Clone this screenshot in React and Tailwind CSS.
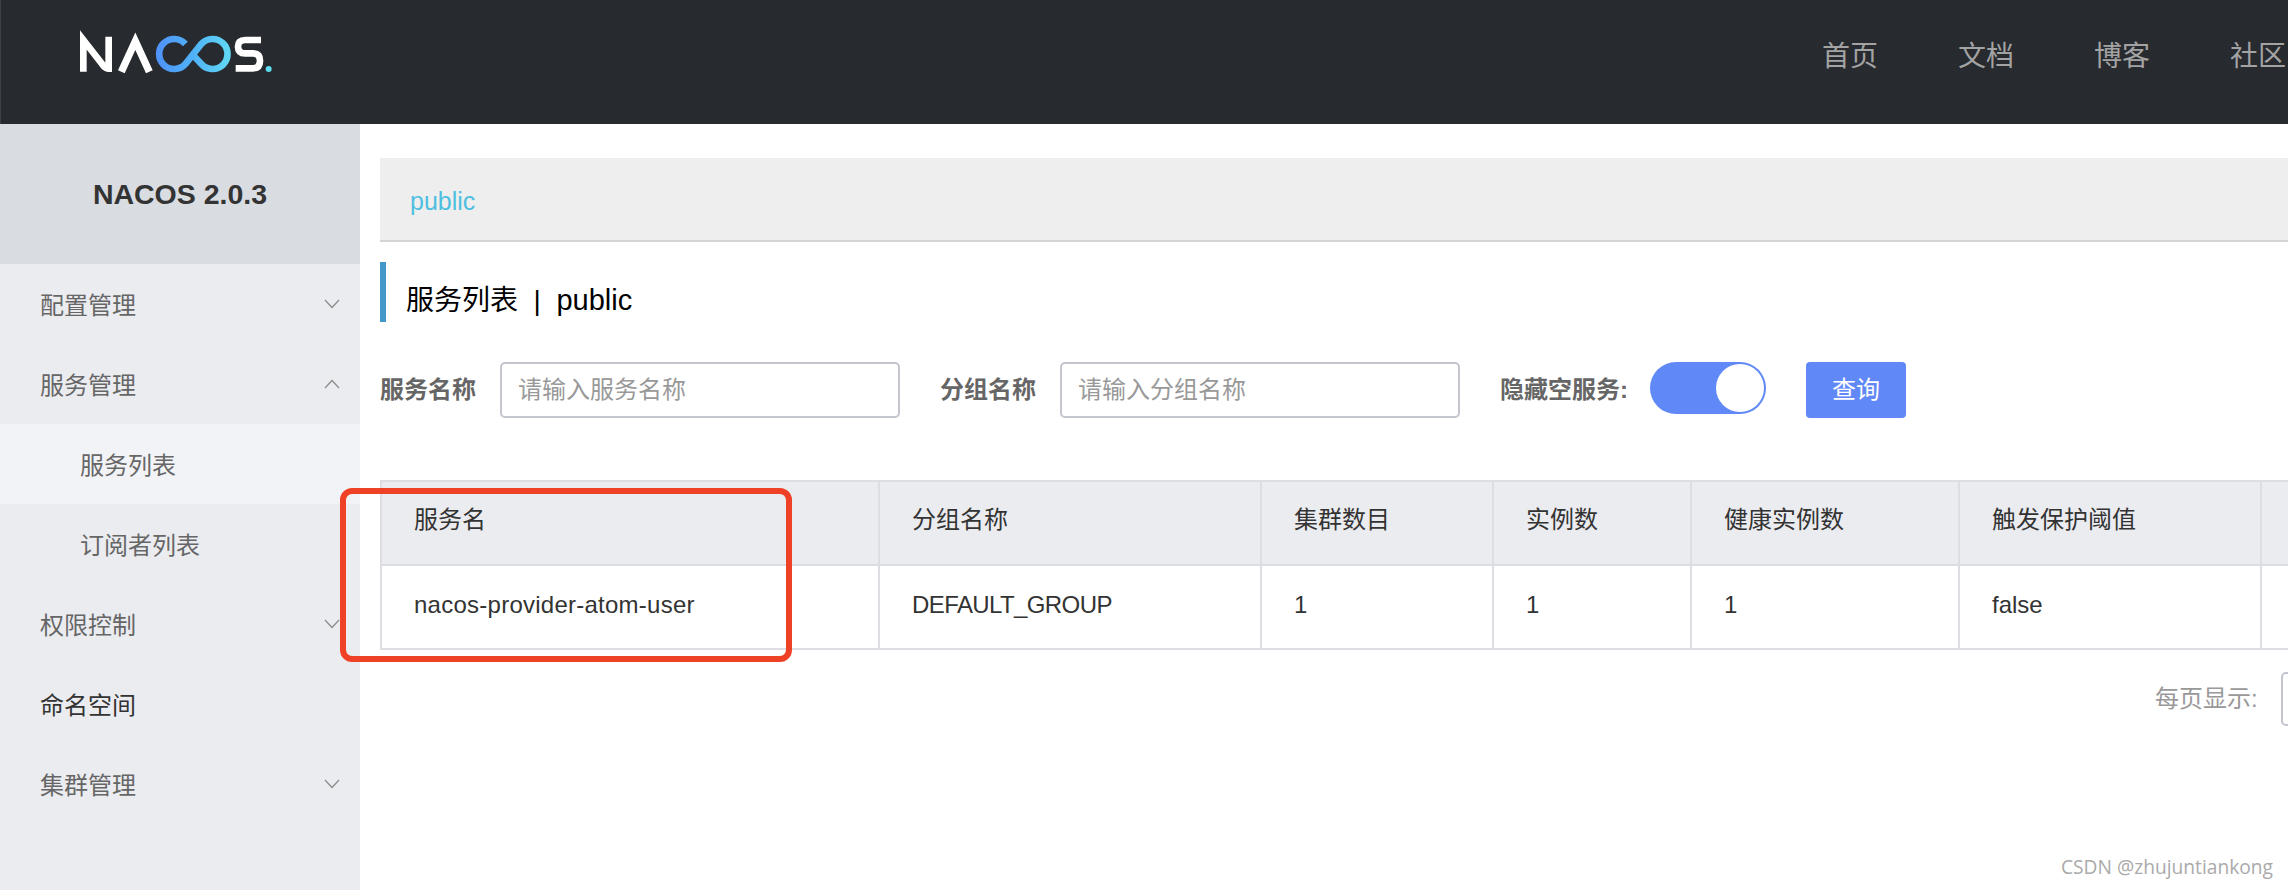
import React from 'react';

const font = { fontFamily: '"Liberation Sans", "Noto Sans CJK SC", sans-serif' };

const menus = [
  { name: '配置管理', arrow: 'down' },
  { name: '服务管理', arrow: 'up' },
  { name: '服务列表', sub: true, active: true },
  { name: '订阅者列表', sub: true },
  { name: '权限控制', arrow: 'down' },
  { name: '命名空间', dark: true },
  { name: '集群管理', arrow: 'down' },
];

const columns = [
  { title: '服务名', value: 'nacos-provider-atom-user', width: 'w-[498px]', valueClass: 'tracking-[0.25px]' },
  { title: '分组名称', value: 'DEFAULT_GROUP', width: 'w-[382px]', valueClass: 'tracking-[-0.6px]' },
  { title: '集群数目', value: '1', width: 'w-[232px]' },
  { title: '实例数', value: '1', width: 'w-[198px]' },
  { title: '健康实例数', value: '1', width: 'w-[268px]' },
  { title: '触发保护阈值', value: 'false', width: 'w-[302px]' },
  { title: '', value: '', width: 'w-[200px]' },
];

function Logo() {
  return (
    <svg viewBox="0 0 690 210" className="w-[230px] h-[70px] shrink-0 mt-[20px]">
      <defs>
        <linearGradient id="loop" x1="280" x2="520" y1="0" y2="0" gradientUnits="userSpaceOnUse">
          <stop offset="0" stopColor="#4f8ff7" />
          <stop offset="0.5" stopColor="#50b2f6" />
          <stop offset="1" stopColor="#62dcf3" />
        </linearGradient>
      </defs>
      <path d="M70 155V60L130 137Q138 146 146 146V50" fill="none" stroke="#fff" strokeWidth="20" />
      <path d="M184 155L226 64L268 155" fill="none" stroke="#fff" strokeWidth="22" />
      <path
        d="M376 72A45 45 0 1 0 376 132L424 72A45 45 0 1 1 424 132L396 102"
        fill="none"
        stroke="url(#loop)"
        strokeWidth="20"
      />
      <path d="M603 60H556Q534 60 534 80Q534 100 556 100H578Q600 100 600 122Q600 145 578 145H527" fill="none" stroke="#fff" strokeWidth="20" />
      <circle cx="626" cy="147" r="9" fill="#5fdcf0" />
    </svg>
  );
}

function Chevron({ dir }) {
  return (
    <svg viewBox="0 0 16 10" className="w-[16px] h-[10px]" fill="none" stroke="#8a8a8a" strokeWidth="1.2">
      <path d={dir === 'up' ? 'M1 9L8 1.5L15 9' : 'M1 1L8 8.5L15 1'} />
    </svg>
  );
}

function Field({ label, placeholder, labelClass }) {
  return (
    <div className={`flex items-center ${labelClass}`}>
      <label className="w-[120px] text-[24px] font-bold text-[#666]">{label}</label>
      <div className="w-[400px] h-[56px] border-2 border-[#c4c6cf] rounded-[5px] flex items-center pl-[16px] text-[24px] text-[#999]">
        {placeholder}
      </div>
    </div>
  );
}

export default function App() {
  return (
    <div className="relative w-full h-screen overflow-hidden flex flex-col bg-white" style={font}>
      <header className="h-[124px] shrink-0 bg-[#272a2f] border-l border-[#3c3f44] flex pl-[59px] overflow-hidden">
        <Logo />
        <nav className="ml-[1532px] flex gap-[80px] h-[114px] items-center text-[28px] text-[#a3a3a3] whitespace-nowrap">
          <span>首页</span>
          <span>文档</span>
          <span>博客</span>
          <span>社区</span>
        </nav>
      </header>

      <div className="flex flex-1 min-h-0">
        <aside className="w-[360px] shrink-0 bg-[#ebecf0]">
          <div className="h-[140px] bg-[#d9dce1] flex items-center justify-center text-[28.5px] font-bold text-[#333]">
            NACOS 2.0.3
          </div>
          <ul>
            {menus.map((item) => (
              <li
                key={item.name}
                className={`h-[80px] flex items-center justify-between text-[24px] pr-[20px]
                  ${item.sub ? 'pl-[80px]' : 'pl-[40px]'}
                  ${item.active ? 'bg-[#f2f3f7]' : ''}
                  ${item.dark ? 'text-[#333]' : 'text-[#666]'}`}
              >
                <span className="pt-[3px]">{item.name}</span>
                {item.arrow && <Chevron dir={item.arrow} />}
              </li>
            ))}
          </ul>
        </aside>

        <main className="flex-1 min-w-0 pl-[20px] pt-[34px] overflow-hidden">
          <div className="h-[84px] bg-[#eeeeee] border-b-2 border-[#d4d4d4] flex items-center pl-[30px] pt-[6px] text-[25px] text-[#4fbfe0]">
            public
          </div>

          <div className="mt-[20px] h-[60px] border-l-[6px] border-[#4298c9] flex items-center pl-[20px] pt-[18px] text-[28px] text-black whitespace-pre">
            服务列表  |  <span className="text-[29px]">public</span>
          </div>

          <div className="mt-[40px] flex items-start">
            <Field label="服务名称" placeholder="请输入服务名称" />
            <Field label="分组名称" placeholder="请输入分组名称" labelClass="ml-[40px]" />
            <span className="ml-[40px] h-[56px] flex items-center text-[24px] font-bold text-[#666]">隐藏空服务:</span>
            <div className="ml-[22px] w-[116px] h-[52px] rounded-full bg-[#6088f7] flex items-center justify-end pr-[2px]">
              <div className="w-[48px] h-[48px] rounded-full bg-white" />
            </div>
            <button className="ml-[40px] w-[100px] h-[56px] rounded-[4px] bg-[#6088f7] text-white text-[24px]">查询</button>
          </div>

          <table className="mt-[62px] table-fixed border-collapse w-[2080px] text-[24px] text-[#333]">
            <thead>
              <tr className="h-[84px] bg-[#ebecf0]">
                {columns.map((col, i) => (
                  <th key={i} className={`${col.width} border-2 border-[#dcdee3] pl-[32px] pb-[6px] text-left font-normal`}>
                    {col.title}
                  </th>
                ))}
              </tr>
            </thead>
            <tbody>
              <tr className="h-[84px]">
                {columns.map((col, i) => (
                  <td key={i} className={`border-2 border-[#dcdee3] pl-[32px] pb-[5px] ${col.valueClass || ''}`}>
                    {col.value}
                  </td>
                ))}
              </tr>
            </tbody>
          </table>

          <div className="mt-[22px] flex items-center text-[24px] text-[#999]">
            <span className="ml-[1775px] shrink-0 whitespace-nowrap">每页显示:</span>
            <div className="ml-[23px] w-[100px] h-[54px] shrink-0 border-2 border-[#c4c6cf] rounded-[5px]" />
          </div>
        </main>
      </div>

      {/* red mark over the first column */}
      <div className="absolute left-[340px] top-[488px] w-[452px] h-[174px] border-[6px] border-[#ee4125] rounded-[12px]" />

      <div
        className="absolute right-[15px] bottom-[8px] text-[19.2px] text-[#aaa]"
        style={{ fontFamily: '"Open Sans", sans-serif' }}
      >
        CSDN @zhujuntiankong
      </div>
    </div>
  );
}
